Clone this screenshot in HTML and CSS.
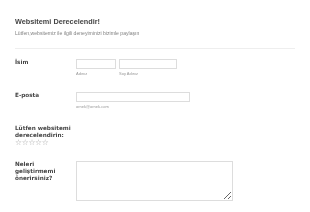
FILE: index.html
```html
<!DOCTYPE html>
<html lang="tr">
<head>
    <meta charset="UTF-8">
    <title>Websitemi Derecelendir!</title>
    <link rel="stylesheet" href="styles.css">
</head>
<body>
    <div class="form">
        <div class="header">
            <h2>Websitemi Derecelendir!</h2>
            <p>Lütfen,websitemiz ile ilgili deneyiminizi bizimle paylaşın</p>
        </div>

        <div class="row">
            <label class="label">İsim</label>
            <div class="field name-field">
                <div class="sub">
                    <input type="text" class="input first">
                    <span class="sublabel">Adınız</span>
                </div>
                <div class="sub">
                    <input type="text" class="input last">
                    <span class="sublabel">Soy Adınız</span>
                </div>
            </div>
        </div>

        <div class="row">
            <label class="label">E-posta</label>
            <div class="field">
                <input type="email" class="input email">
                <span class="sublabel">ornek@ornek.com</span>
            </div>
        </div>

        <div class="row rating-row">
            <label class="label">Lütfen websitemi derecelendirin:</label>
            <div class="stars">☆☆☆☆☆</div>
        </div>

        <div class="row">
            <label class="label">Neleri geliştirmemi önerirsiniz?</label>
            <div class="field">
                <textarea class="textarea"></textarea>
            </div>
        </div>
    </div>
</body>
</html>
```

FILE: styles.css
```css
body {
    margin: 0;
    background-color: #fff;
    font-family: "DejaVu Sans", Verdana, sans-serif;
}
.form {
    padding: 0 15px;
    will-change: transform;
    -webkit-font-smoothing: antialiased;
}
.header {
    padding-top: 17px;
    padding-bottom: 12px;
    border-bottom: 1px solid #eee;
}
.header h2 {
    margin: 0;
    font-family: "Liberation Sans", Arial, sans-serif;
    font-size: 7.3px;
    line-height: 9px;
    font-weight: bold;
    color: #444;
}
.header p {
    margin: 4px 0 0;
    font-family: "Liberation Sans", Arial, sans-serif;
    font-size: 5.1px;
    line-height: 6px;
    color: #808080;
}
.row {
    display: flex;
    align-items: flex-start;
    margin-top: 16px;
}
.header + .row {
    margin-top: 10px;
}
.rating-row + .row {
    margin-top: 15px;
}
.label {
    width: 61px;
    flex-shrink: 0;
    padding-right: 2px;
    box-sizing: border-box;
    font-size: 5.7px;
    line-height: 6.8px;
    font-weight: bold;
    color: #444;
}
.field {
    display: flex;
    flex-direction: column;
}
.name-field {
    flex-direction: row;
    gap: 3px;
}
.sub {
    display: flex;
    flex-direction: column;
}
.input {
    height: 10px;
    box-sizing: border-box;
    margin: 0;
    padding: 0 2px;
    border: 1px solid #ddd;
    font-size: 5px;
}
.first {
    width: 40px;
}
.last {
    width: 58px;
}
.email {
    width: 114px;
}
.sublabel {
    margin-top: 2px;
    font-family: "Liberation Sans", Arial, sans-serif;
    font-size: 4px;
    line-height: 5px;
    color: #999;
}
.rating-row {
    flex-direction: column;
}
.stars {
    margin-top: 0.5px;
    font-size: 7.8px;
    line-height: 7px;
    letter-spacing: -0.3px;
    color: #aaa;
}
.textarea {
    width: 157px;
    height: 40px;
    box-sizing: border-box;
    margin: 0;
    padding: 2px;
    border: 1px solid #ddd;
    font-size: 5px;
}
```
